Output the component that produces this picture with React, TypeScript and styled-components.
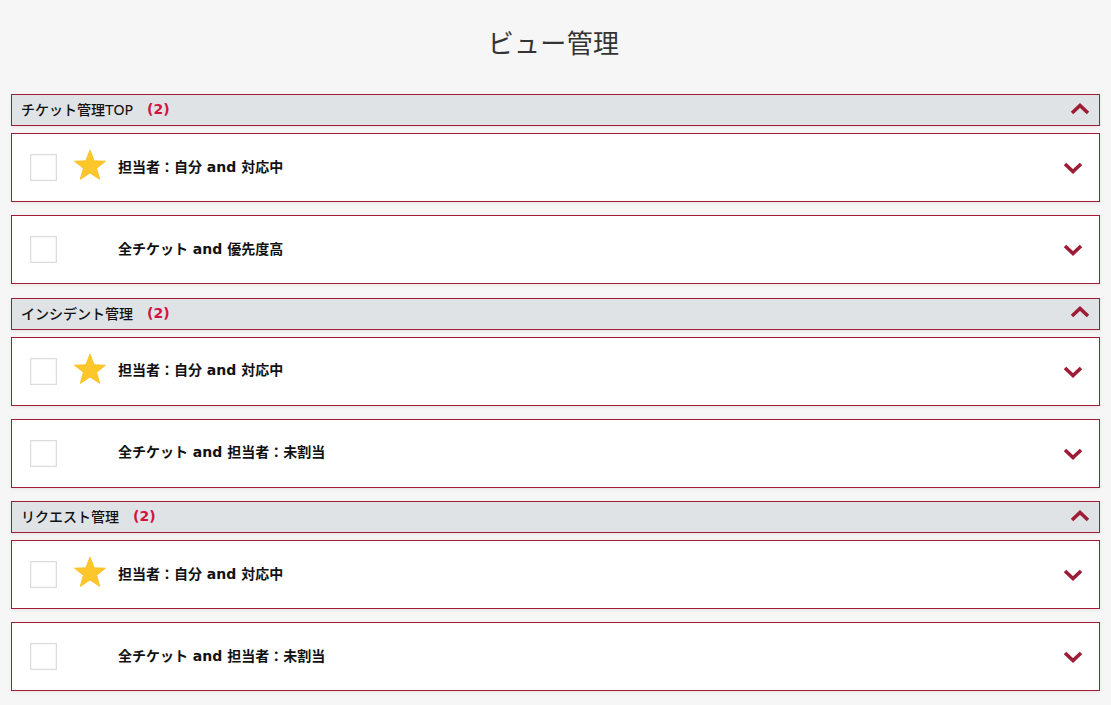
import React from "react";
import styled, { createGlobalStyle } from "styled-components";

const Global = createGlobalStyle`
  html, body { margin: 0; padding: 0; background: #f6f6f6; }
  body { font-family: "Noto Sans CJK JP", "Noto Sans", sans-serif; color: #111; }
`;

const mixedFont = `"DejaVu Sans", "Noto Sans CJK JP", sans-serif`;

const Page = styled.div`
  padding: 0 11px 14px 11px;
`;

const Title = styled.h1`
  margin: 0;
  height: 94px;
  display: flex;
  align-items: center;
  justify-content: center;
  padding: 0 4px 12px 0;
  box-sizing: border-box;
  font-size: 26px;
  font-weight: 400;
  color: #333;
  letter-spacing: 0.3px;
`;

const Section = styled.section`
  margin-bottom: 13.5px;
`;

const GroupHeader = styled.div`
  height: 32px;
  box-sizing: border-box;
  border: 1px solid #a31b35;
  background: #dfe3e6;
  display: flex;
  align-items: center;
  padding: 0 9px 2px 9px;
  margin-bottom: 7px;
  box-shadow: 0 1px 3px rgba(0, 0, 0, 0.08);
`;

const GroupName = styled.span`
  font-family: ${mixedFont};
  font-size: 14px;
  font-weight: 500;
  color: #111;
`;

const Count = styled.span`
  font-family: ${mixedFont};
  margin-left: 14px;
  font-size: 14px;
  font-weight: 700;
  color: #d2123f;
`;

const Spacer = styled.div`
  flex: 1;
`;

const Card = styled.div`
  height: 69px;
  box-sizing: border-box;
  border: 1px solid #a31b35;
  background: #fff;
  display: flex;
  align-items: center;
  padding: 0 16px 0 18px;
  box-shadow: 0 1px 3px rgba(0, 0, 0, 0.08);
  & + & {
    margin-top: 13px;
  }
`;

const Check = styled.div`
  width: 27px;
  height: 27px;
  box-sizing: border-box;
  border: 1px solid #dcdcdc;
  box-shadow: inset 0 0 2px rgba(0, 0, 0, 0.12);
  background: #fff;
  flex: none;
`;

const StarSlot = styled.div`
  width: 34px;
  height: 34px;
  margin-left: 16px;
  margin-right: 11px;
  margin-top: -4px;
  flex: none;
  display: flex;
  align-items: center;
  justify-content: center;
`;

const ViewName = styled.span`
  font-family: ${mixedFont};
  font-size: 14px;
  font-weight: 700;
  color: #111;
  margin-top: -4px;
`;

const Chevron = styled.svg<{ $up?: boolean }>`
  width: 20px;
  height: 13px;
  flex: none;
  margin-top: ${(p) => (p.$up ? "-2px" : "2px")};
`;

const Star = () => (
  <svg width="34" height="33" viewBox="0 0 34 33">
    <path
      d="M17 1 L21.2 11.8 L32.6 12.2 L23.6 19.2 L26.8 30.4 L17 24 L7.2 30.4 L10.4 19.2 L1.4 12.2 L12.8 11.8 Z"
      fill="#fdc62b"
      stroke="#f7bc1c"
      strokeWidth="0.8"
      strokeLinejoin="round"
    />
  </svg>
);

const ChevronIcon = ({ up }: { up?: boolean }) => (
  <Chevron $up={up} viewBox="0 0 20 13">
    <polyline
      points={up ? "2,11 10,3.5 18,11" : "2,2 10,9.5 18,2"}
      fill="none"
      stroke="#9e1c36"
      strokeWidth="3.6"
      strokeLinecap="butt"
      strokeLinejoin="miter"
    />
  </Chevron>
);

type View = { name: string; starred: boolean };
type Group = { name: string; views: View[] };

const groups: Group[] = [
  {
    name: "チケット管理TOP",
    views: [
      { name: "担当者：自分 and 対応中", starred: true },
      { name: "全チケット and 優先度高", starred: false },
    ],
  },
  {
    name: "インシデント管理",
    views: [
      { name: "担当者：自分 and 対応中", starred: true },
      { name: "全チケット and 担当者：未割当", starred: false },
    ],
  },
  {
    name: "リクエスト管理",
    views: [
      { name: "担当者：自分 and 対応中", starred: true },
      { name: "全チケット and 担当者：未割当", starred: false },
    ],
  },
];

export default function App() {
  return (
    <>
      <Global />
      <Page>
        <Title>ビュー管理</Title>
        {groups.map((g) => (
          <Section key={g.name}>
            <GroupHeader>
              <GroupName>{g.name}</GroupName>
              <Count>(2)</Count>
              <Spacer />
              <ChevronIcon up />
            </GroupHeader>
            {g.views.map((v, i) => (
              <Card key={i}>
                <Check />
                <StarSlot>{v.starred && <Star />}</StarSlot>
                <ViewName>{v.name}</ViewName>
                <Spacer />
                <ChevronIcon />
              </Card>
            ))}
          </Section>
        ))}
      </Page>
    </>
  );
}
